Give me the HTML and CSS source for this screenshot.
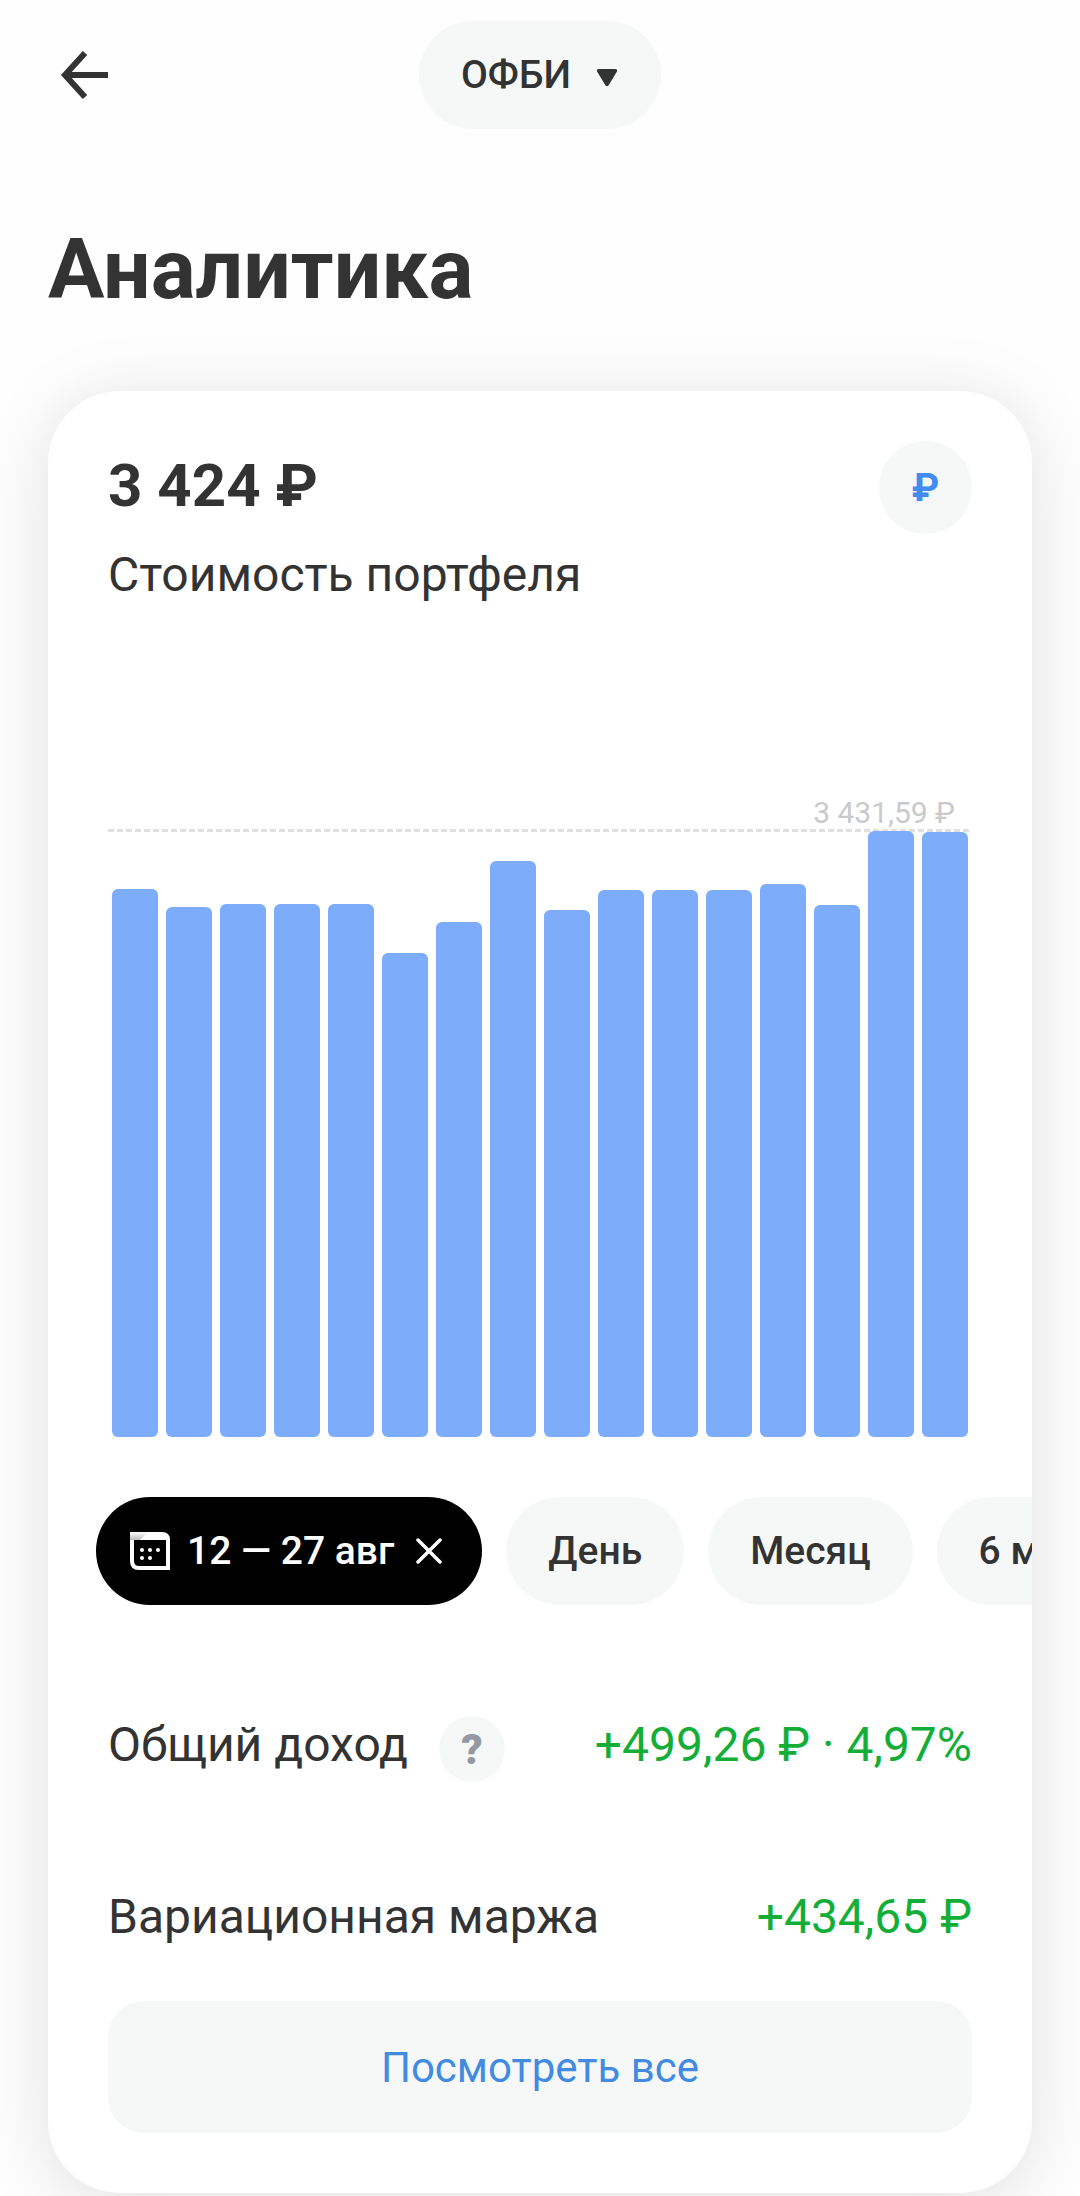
FILE: index.html
```html
<!DOCTYPE html>
<html lang="ru">
<head>
    <meta charset="UTF-8">
    <meta name="viewport" content="width=device-width, initial-scale=1.0">
    <title>Аналитика</title>
    <link rel="stylesheet" href="styles.css">
</head>
<body>
    <header class="topbar">
        <button class="back" type="button" aria-label="Назад">
            <svg width="48" height="48" viewBox="0 0 48 48" fill="none" stroke="#333" stroke-width="6">
                <path d="M48 24H5M25 2L5 24l20 22"/>
            </svg>
        </button>
        <div class="account">
            <select class="account-select" aria-label="Счёт">
                <option>ОФБИ</option>
            </select>
            <svg class="account-arrow" width="22" height="18" viewBox="0 0 22 18" fill="#333">
                <path d="M3 0h16q3 0 1.800 2.800L12.800 16q-1.800 2.600-3.600 0L1.200 2.800Q0 0 3 0z"/>
            </svg>
        </div>
    </header>

    <main>
        <h1>Аналитика</h1>

        <section class="card">
            <div class="summary">
                <div>
                    <h2>3 424 ₽</h2>
                    <p class="caption">Стоимость портфеля</p>
                </div>
                <button class="currency" type="button" aria-label="Валюта">₽</button>
            </div>

            <!-- Portfolio value by day -->
            <div class="chart">
                <p class="peak">3 431,59 ₽</p>
                <div class="peak-line"></div>
                <div class="bars">
                    <div class="bar" style="height: 90.4%"></div>
                    <div class="bar" style="height: 87.4%"></div>
                    <div class="bar" style="height: 88%"></div>
                    <div class="bar" style="height: 88%"></div>
                    <div class="bar" style="height: 88%"></div>
                    <div class="bar" style="height: 79.8%"></div>
                    <div class="bar" style="height: 85%"></div>
                    <div class="bar" style="height: 95%"></div>
                    <div class="bar" style="height: 86.9%"></div>
                    <div class="bar" style="height: 90.3%"></div>
                    <div class="bar" style="height: 90.3%"></div>
                    <div class="bar" style="height: 90.3%"></div>
                    <div class="bar" style="height: 91.3%"></div>
                    <div class="bar" style="height: 87.8%"></div>
                    <div class="bar" style="height: 100%"></div>
                    <div class="bar" style="height: 99.8%"></div>
                </div>
            </div>

            <!-- Period filter -->
            <div class="periods">
                <button class="chip active" type="button">
                    <svg width="40" height="38" viewBox="0 0 40 38">
                        <defs>
                            <linearGradient id="lid" x1="0" y1="0" x2="0" y2="1">
                                <stop offset="0" stop-color="#fff"/>
                                <stop offset="1" stop-color="#bbb"/>
                            </linearGradient>
                        </defs>
                        <path fill="#fff" fill-rule="evenodd" d="M0 0h32q8 0 8 8v30H9q-9 0-9-9zM4 8v21q0 5 5 5h27V8z"/>
                        <path fill="url(#lid)" d="M0 0h18L10 8H0z"/>
                        <g fill="#fff">
                            <circle cx="12" cy="18" r="2"/>
                            <circle cx="20" cy="18" r="2"/>
                            <circle cx="28" cy="18" r="2"/>
                            <circle cx="12" cy="26" r="2"/>
                            <circle cx="20" cy="26" r="2"/>
                        </g>
                    </svg>
                    <span class="chip-dates">12 — 27 авг</span>
                    <svg width="26" height="26" viewBox="0 0 26 26" stroke="#fff" stroke-width="3.500" stroke-linecap="round">
                        <path d="M2 2l22 22M24 2L2 24"/>
                    </svg>
                </button>
                <button class="chip" type="button">День</button>
                <button class="chip" type="button">Месяц</button>
                <button class="chip" type="button">6 месяцев</button>
            </div>

            <div class="rows">
                <div class="row">
                    <span>Общий доход</span>
                    <button class="help" type="button" aria-label="Подробнее">?</button>
                    <span class="value">+499,26 ₽ · 4,97%</span>
                </div>
                <div class="row">
                    <span>Вариационная маржа</span>
                    <span class="value">+434,65 ₽</span>
                </div>
            </div>

            <button class="show-all" type="button">Посмотреть все</button>
        </section>
    </main>
</body>
</html>
```

FILE: styles.css
```css
* {
    box-sizing: border-box;
}
body {
    margin: 0;
    min-height: 100vh;
    overflow-x: hidden;
    background-color: #fefefe;
    color: #333;
    font-family: Roboto, "Liberation Sans", sans-serif;
}
h1, h2, p {
    margin: 0;
}
button, select {
    border: 0;
    padding: 0;
    color: inherit;
    font-family: inherit;
    cursor: pointer;
}
svg {
    display: block;
    flex-shrink: 0;
}

/* Top bar */
.topbar {
    display: grid;
    grid-template-columns: 1fr auto 1fr;
    align-items: center;
    padding: 21px 60px 0;
}
.back {
    justify-self: start;
    background: none;
}
.account {
    position: relative;
}
.account-select {
    appearance: none;
    height: 108px;
    padding: 0 90px 0 42px;
    border-radius: 54px;
    background-color: #f6f8f8;
    font-size: 39px;
    font-weight: 500;
}
.account-arrow {
    position: absolute;
    top: 48px;
    right: 43px;
    pointer-events: none;
}

h1 {
    padding: 0 48px;
    margin-top: 93px;
    font-size: 84px;
    line-height: 96px;
    font-weight: 700;
}

/* Card */
.card {
    margin: 73px 48px 0;
    padding: 50px 60px 60px;
    border-radius: 72px;
    background-color: #fff;
    box-shadow: 0 9px 72px rgba(0, 0, 0, 0.12);
}
.summary {
    display: flex;
    justify-content: space-between;
    align-items: flex-start;
}
h2 {
    font-size: 60px;
    line-height: 90px;
    font-weight: 700;
}
.caption {
    margin-top: 14px;
    font-size: 48px;
    line-height: 60px;
}
.currency {
    width: 93px;
    height: 93px;
    border-radius: 50%;
    background-color: #f6f8f8;
    color: #428bf0;
    font-size: 39px;
    font-weight: 700;
}

/* Chart */
.chart {
    margin-top: 192px;
}
.peak {
    padding-right: 17px;
    color: #c8cacc;
    font-size: 30px;
    line-height: 32px;
    text-align: right;
}
.peak-line {
    height: 3px;
    background: repeating-linear-gradient(to right, #dfdfdf 0 6px, transparent 6px 9px);
}
.bars {
    display: flex;
    align-items: flex-end;
    gap: 8px;
    height: 606px;
    margin-top: -1px;
    padding: 0 4px;
}
.bar {
    flex: 1;
    border-radius: 6px;
    background-color: #7cacfa;
}

/* Period filter */
.periods {
    display: flex;
    gap: 24px;
    margin: 60px -60px 0;
    padding-left: 48px;
    overflow-x: auto;
    scrollbar-width: none;
}
.chip {
    display: flex;
    align-items: center;
    flex-shrink: 0;
    height: 108px;
    padding: 0 42px;
    border-radius: 54px;
    background-color: #f6f8f8;
    font-size: 39px;
    font-weight: 500;
    white-space: nowrap;
}
.chip.active {
    padding: 0 40px 0 34px;
    background-color: #000;
    color: #fff;
}
.chip-dates {
    margin: 0 22px 0 17px;
}

/* Income rows */
.rows {
    display: flex;
    flex-direction: column;
    gap: 106px;
    margin-top: 111px;
}
.row {
    display: flex;
    align-items: flex-start;
    gap: 31px;
    font-size: 48px;
    line-height: 58px;
}
.value {
    margin-left: auto;
    color: #13ae38;
}
.help {
    width: 66px;
    height: 66px;
    border-radius: 50%;
    background-color: #f6f8f8;
    color: #9399a2;
    font-size: 42px;
    font-weight: 900;
}
.show-all {
    width: 100%;
    height: 132px;
    margin-top: 55px;
    border-radius: 36px;
    background-color: #f6f8f8;
    color: #428be0;
    font-size: 42px;
}
```
